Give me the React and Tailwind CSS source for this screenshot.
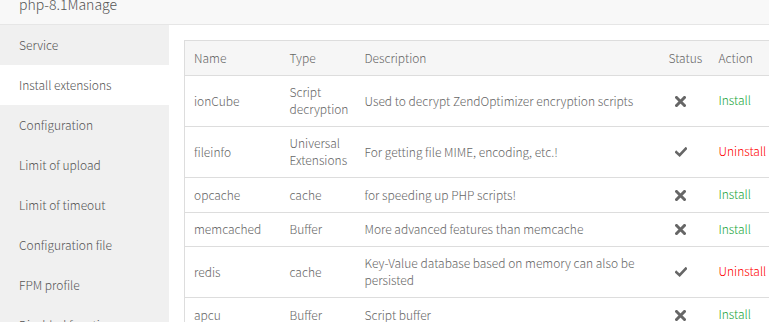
import React from "react";

const menu = [
  "Service",
  "Install extensions",
  "Configuration",
  "Limit of upload",
  "Limit of timeout",
  "Configuration file",
  "FPM profile",
  "Disabled functions",
];

const rows = [
  { name: "ionCube", type: ["Script", "decryption"], desc: "Used to decrypt ZendOptimizer encryption scripts", ok: false, h: 51 },
  { name: "fileinfo", type: ["Universal", "Extensions"], desc: "For getting file MIME, encoding, etc.!", ok: true, h: 51 },
  { name: "opcache", type: ["cache"], desc: "for speeding up PHP scripts!", ok: false, h: 35 },
  { name: "memcached", type: ["Buffer"], desc: "More advanced features than memcache", ok: false, h: 34 },
  { name: "redis", type: ["cache"], desc: "Key-Value database based on memory can also be persisted", ok: true, h: 51 },
  { name: "apcu", type: ["Buffer"], desc: "Script buffer", ok: false, h: 35 },
];

function XIcon() {
  return (
    <svg width="11" height="11" viewBox="0 0 11 11">
      <path d="M1.5 1.5 L9.5 9.5 M9.5 1.5 L1.5 9.5" stroke="#666" strokeWidth="3" strokeLinecap="square" fill="none" />
    </svg>
  );
}

function CheckIcon() {
  return (
    <svg width="12" height="10" viewBox="0 0 12 10">
      <path d="M1.3 5.2 L4.6 8.2 L10.8 1.6" stroke="#666" strokeWidth="2.6" strokeLinecap="square" strokeLinejoin="miter" fill="none" />
    </svg>
  );
}

export default function App() {
  return (
    <div
      className="w-[769px] h-[322px] overflow-hidden bg-white text-[#666] text-[12px] font-light"
      style={{ fontFamily: '"Noto Sans CJK KR", "Noto Sans", sans-serif' }}
    >
      <div className="h-[25px] bg-[#f8f8f8] border-b border-[#e6e6e6] overflow-hidden pl-[19px]">
        <div className="text-[14px] leading-[20px] mt-[-6px] text-[#555]">php-8.1Manage</div>
      </div>
      <div className="flex h-[297px]">
        <div className="w-[169px] shrink-0 bg-[#f0f0f0]">
          {menu.map((m, i) => (
            <div
              key={m}
              className={
                "h-[40px] flex items-center pl-[19px] text-[#555] " +
                (i === 1 ? "bg-white" : "")
              }
            >
              {m}
            </div>
          ))}
        </div>
        <div className="flex-1 overflow-hidden pl-[15px] pt-[15px]">
          <table className="w-[610px] table-fixed border-collapse border border-[#ddd]">
            <colgroup>
              <col className="w-[96px]" />
              <col className="w-[75px]" />
              <col className="w-[304px]" />
              <col className="w-[50px]" />
              <col className="w-[85px]" />
            </colgroup>
            <thead>
              <tr className="h-[35px] bg-[#f6f6f6] border-b border-[#ddd]">
                <th className="text-left font-light px-[9px]">Name</th>
                <th className="text-left font-light px-[9px]">Type</th>
                <th className="text-left font-light px-[9px]">Description</th>
                <th className="text-left font-light px-[9px]">Status</th>
                <th className="text-left font-light px-[9px]">Action</th>
              </tr>
            </thead>
            <tbody>
              {rows.map((r) => (
                <tr key={r.name} className="border-b border-[#ddd]" style={{ height: r.h }}>
                  <td className="px-[9px] pb-[2px] leading-[17px]">{r.name}</td>
                  <td className="px-[9px] pb-[2px] leading-[17px]">
                    {r.type.map((t) => (
                      <div key={t}>{t}</div>
                    ))}
                  </td>
                  <td className="px-[9px] pb-[2px] leading-[17px] pr-[16px]">{r.desc}</td>
                  <td className="px-[9px]">
                    <div className="pl-[6px] flex">
                      {r.ok ? <CheckIcon /> : <XIcon />}
                    </div>
                  </td>
                  <td className="px-[9px] pb-[2px]">
                    {r.ok ? (
                      <span className="text-[#ff0000]">Uninstall</span>
                    ) : (
                      <span className="text-[#20a53a]">Install</span>
                    )}
                  </td>
                </tr>
              ))}
            </tbody>
          </table>
        </div>
      </div>
    </div>
  );
}
